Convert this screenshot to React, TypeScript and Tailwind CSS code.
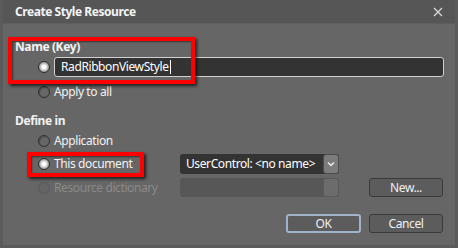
const font = { fontFamily: '"Noto Sans", "Open Sans", sans-serif' };

const Radio = ({ checked = false, disabled = false }: { checked?: boolean; disabled?: boolean }) => {
	if (checked) {
		return (
			<span className="w-[12px] h-[12px] rounded-full border border-[#2e2e2e] bg-[radial-gradient(circle,#ffffff_0,#ffffff_2px,#d0d0d0_3px,#9a9a9a_5px)] shrink-0" />
		);
	}
	return (
		<span
			className={
				disabled
					? 'w-[12px] h-[12px] rounded-full border border-[#5a5a5a] bg-[#646464] shrink-0'
					: 'w-[12px] h-[12px] rounded-full border border-[#2f2f2f] bg-[#676767] shadow-[inset_1px_1px_1px_rgba(0,0,0,0.25)] shrink-0'
			}
		/>
	);
};

const App = () => {
	return (
		<div
			className="relative w-[458px] h-[248px] bg-[#666666] border-l-[3px] border-r-[3px] border-b-[3px] border-[#5b5b5b] text-[12px] tracking-[-0.4px] text-[#f2f2f2] overflow-hidden"
			style={font}
		>
			<div className="h-[24px] bg-[#565656] flex items-center justify-between pl-[12px] pr-[12px] border-b border-[#5e5e5e]">
				<span className="font-bold text-[12px] tracking-[-0.45px] text-[#f4f4f4]">Create Style Resource</span>
				<svg width="10" height="10" viewBox="0 0 10 10" className="mt-[1px]">
					<path d="M1 1 L9 9 M9 1 L1 9" stroke="#d8d8d8" strokeWidth="1.3" />
				</svg>
			</div>

			<div className="pl-[12px]">
				<div className="mt-[15px] h-[16px] flex items-center font-bold">Name (Key)</div>

				<div className="mt-[2px] ml-[23px] h-[20px] flex items-center gap-[4px]">
					<Radio checked />
					<div className="w-[390px] h-[20px] bg-[#333333] border border-[#d0d0d0] rounded-[3px] flex items-center pl-[6px] text-white">
						RadRibbonViewStyle
						<span className="w-[1px] h-[14px] bg-white ml-[1px]" />
					</div>
				</div>

				<div className="mt-[7px] ml-[23px] h-[16px] flex items-center gap-[4px]">
					<Radio />
					<span>Apply to all</span>
				</div>

				<div className="mt-[13px] h-[16px] flex items-center font-bold">Define in</div>

				<div className="mt-[4px] ml-[23px] h-[16px] flex items-center gap-[4px]">
					<Radio />
					<span>Application</span>
				</div>

				<div className="mt-[5px] ml-[23px] h-[20px] flex items-center">
					<div className="w-[142px] flex items-center gap-[4px]">
						<Radio checked />
						<span>This document</span>
					</div>
					<div className="relative w-[159px] h-[20px] bg-[#333333] rounded-[3px] flex items-center pl-[6px] text-white">
						UserControl: &lt;no name&gt;
						<div className="absolute right-0 top-0 w-[16px] h-[20px] bg-[#7b7b7b] border border-[#4c4c4c] rounded-[3px] flex items-center justify-center">
							<svg width="8" height="6" viewBox="0 0 8 6">
								<path d="M1 1.5 L4 4.5 L7 1.5" stroke="#f0f0f0" strokeWidth="1.4" fill="none" />
							</svg>
						</div>
					</div>
				</div>

				<div className="mt-[4px] ml-[23px] h-[19px] flex items-center">
					<div className="w-[142px] flex items-center gap-[4px] text-[#8a8a8a]">
						<Radio disabled />
						<span>Resource dictionary</span>
					</div>
					<div className="relative w-[159px] h-[19px] bg-[#575757] rounded-[3px]">
						<div className="absolute right-0 top-0 w-[16px] h-[19px] bg-[#6c6c6c] border border-[#5a5a5a] rounded-[3px]" />
					</div>
					<button className="ml-[30px] w-[74px] h-[19px] bg-[#5c5c5c] border border-[#3a3a3a] rounded-[3px] text-[#f0f0f0]">
						New...
					</button>
				</div>
			</div>

			<div className="mt-[17px] pr-[12px] flex justify-end gap-[8px]">
				<button className="w-[75px] h-[19px] bg-[#5c5c5c] border-2 border-[#9fb3ca] rounded-[3px] text-[#f0f0f0] flex items-center justify-center">
					OK
				</button>
				<button className="w-[74px] h-[19px] bg-[#5c5c5c] border border-[#3a3a3a] rounded-[3px] text-[#f0f0f0] flex items-center justify-center">
					Cancel
				</button>
			</div>

			{/* annotation boxes */}
			<div className="absolute left-[5px] top-[37px] w-[187px] h-[47px] border-4 border-[#ff0000] shadow-[2px_2px_3px_rgba(0,0,0,0.7),inset_1px_1px_2px_rgba(0,0,0,0.5)]" />
			<div className="absolute left-[24px] top-[152px] w-[117px] h-[25px] border-4 border-[#ff0000] shadow-[2px_2px_3px_rgba(0,0,0,0.7),inset_1px_1px_2px_rgba(0,0,0,0.5)]" />
		</div>
	);
};

export default App;
